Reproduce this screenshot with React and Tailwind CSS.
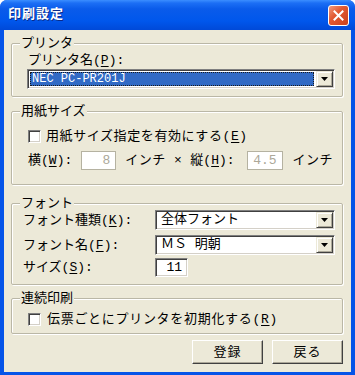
import React from "react";

const font = {
  fontFamily: '"Liberation Mono", "Noto Sans CJK JP", monospace',
};

// sunken classic 3D border
const sunken =
  "border border-t-[#7F7F7F] border-l-[#7F7F7F] border-r-white border-b-white shadow-[inset_1px_1px_0_#404040,inset_-1px_-1px_0_#D4D0C8]";

function Group({ title, className, bodyClass, children }) {
  return (
    <fieldset
      className={`border border-[#BAB7A6] rounded-[2px] px-0 shadow-[inset_1px_1px_0_#fff,1px_1px_0_#fff] ${className}`}
    >
      <legend className="ml-[8px] px-[1px] bg-[#ECE9D8] leading-[13px] text-[13px]">
        {title}
      </legend>
      <div className={bodyClass}>{children}</div>
    </fieldset>
  );
}

function DropButton() {
  return (
    <div className="w-[17px] h-full bg-[#ECE9D8] border border-t-[#ECE9D8] border-l-[#ECE9D8] border-r-[#404040] border-b-[#404040] shadow-[inset_1px_1px_0_#fff,inset_-1px_-1px_0_#ACA899] flex items-center justify-center">
      <svg width="7" height="4" viewBox="0 0 7 4">
        <path d="M0 0h7L3.5 4z" fill="#000" />
      </svg>
    </div>
  );
}

function Combo({ value, selected, className }) {
  return (
    <div className={`flex h-[20px] bg-white p-[1px] ${sunken} ${className || ""}`}>
      <div className="flex-1 flex items-center pl-[1px] pr-[2px]">
        {selected ? (
          <div className="w-full h-[14px] bg-[#316AC5] text-white border border-dotted border-[#1a1a1a] flex items-center pl-[1px] text-[12px] leading-[12px]">
            {value}
          </div>
        ) : (
          <span className="pl-[3px] text-[13px] leading-[14px]">{value}</span>
        )}
      </div>
      <DropButton />
    </div>
  );
}

function Field({ value, disabled, className }) {
  return (
    <div
      className={`h-[19px] bg-white flex items-center justify-end pr-[5px] text-[13px] leading-[13px] ${
        disabled
          ? "border border-[#B5B2A1] text-[#ACA899]"
          : sunken + " text-black"
      } ${className}`}
    >
      {value}
    </div>
  );
}

function CheckBox() {
  return <div className={`w-[13px] h-[13px] bg-white ${sunken}`} />;
}

function U({ children }) {
  return <span className="underline underline-offset-[2px]">{children}</span>;
}

function Button({ children }) {
  return (
    <button className="w-[71px] h-[24px] bg-[#ECE9D8] border border-t-white border-l-white border-r-[#404040] border-b-[#404040] shadow-[inset_-1px_-1px_0_#ACA899] text-[13px] leading-[13px] flex items-center justify-center tracking-[1px]">
      {children}
    </button>
  );
}

export default function App() {
  return (
    <div
      className="w-[355px] h-[375px] bg-[#0554E8] rounded-t-[7px] flex flex-col text-black"
      style={font}
    >
      {/* Title bar */}
      <div className="h-[30px] rounded-t-[7px] bg-[linear-gradient(to_bottom,#3B8EFF_0%,#1C6FF5_10%,#0A5BEA_30%,#0057EC_70%,#0049D8_100%)] flex items-center justify-between pl-[8px] pr-[6px]">
        <span className="text-white font-bold text-[13px] tracking-[1px] [text-shadow:1px_1px_0_#0A2A8A]">
          印刷設定
        </span>
        <div className="w-[21px] h-[21px] rounded-[3px] border border-white bg-[linear-gradient(135deg,#F09A7E_0%,#E25A33_40%,#C9401C_100%)] flex items-center justify-center">
          <svg width="11" height="11" viewBox="0 0 11 11">
            <path d="M1.5 1.5l8 8M9.5 1.5l-8 8" stroke="#fff" strokeWidth="2" strokeLinecap="square" />
          </svg>
        </div>
      </div>

      {/* Body */}
      <div className="flex-1 mx-[4px] mb-[3px] bg-[#ECE9D8] pl-[7px] pr-[8px] pt-[7px] flex flex-col">
        <Group title="プリンタ" bodyClass="pl-[15px] pr-[7px] pb-[7px]">
          <div className="text-[13px] leading-[15px] mt-[3px] ml-[1px] mb-[1px]">
            プリンタ名(<U>P</U>):
          </div>
          <Combo value="NEC PC-PR201J" selected />
        </Group>

        <Group title="用紙サイズ" className="mt-[8px]" bodyClass="pl-[16px] pr-[7px] pb-[14px]">
          <div className="flex items-center mt-[12px] h-[13px]">
            <CheckBox />
            <span className="ml-[5px] text-[13px] leading-[13px] tracking-[0.6px]">
              用紙サイズ指定を有効にする(<U>E</U>)
            </span>
          </div>
          <div className="flex items-center mt-[8px] h-[19px] text-[13px] leading-[13px]">
            <span>横(<U>W</U>):</span>
            <Field value="8" disabled className="w-[35px] ml-[9px]" />
            <span className="ml-[9px] tracking-[0.5px]">インチ ×</span>
            <span className="ml-[8px]">縦(<U>H</U>):</span>
            <Field value="4.5" disabled className="w-[36px] ml-[12px]" />
            <span className="ml-[10px] tracking-[0.5px]">インチ</span>
          </div>
        </Group>

        <Group title="フォント" className="mt-[12px]" bodyClass="pl-[11px] pr-[7px] pb-[7px]">
          <div className="flex items-center h-[20px]">
            <span className="w-[132px] text-[13px] leading-[13px]">フォント種類(<U>K</U>):</span>
            <Combo value="全体フォント" className="flex-1" />
          </div>
          <div className="flex items-center h-[20px] mt-[5px]">
            <span className="w-[132px] text-[13px] leading-[13px]">フォント名(<U>F</U>):</span>
            <Combo value="ＭＳ 明朝" className="flex-1" />
          </div>
          <div className="flex items-center h-[19px] mt-[3px]">
            <span className="w-[132px] text-[13px] leading-[13px]">サイズ(<U>S</U>):</span>
            <Field value="11" className="w-[33px]" />
          </div>
        </Group>

        <Group title="連続印刷" className="mt-[7px]" bodyClass="pl-[16px] pr-[7px] pb-[7px]">
          <div className="flex items-center mt-[8px] h-[13px]">
            <CheckBox />
            <span className="ml-[6px] text-[13px] leading-[13px] tracking-[0.7px]">
              伝票ごとにプリンタを初期化する(<U>R</U>)
            </span>
          </div>
        </Group>

        <div className="flex justify-end gap-[9px] mt-[6px]">
          <Button>登録</Button>
          <Button>戻る</Button>
        </div>
      </div>
    </div>
  );
}
